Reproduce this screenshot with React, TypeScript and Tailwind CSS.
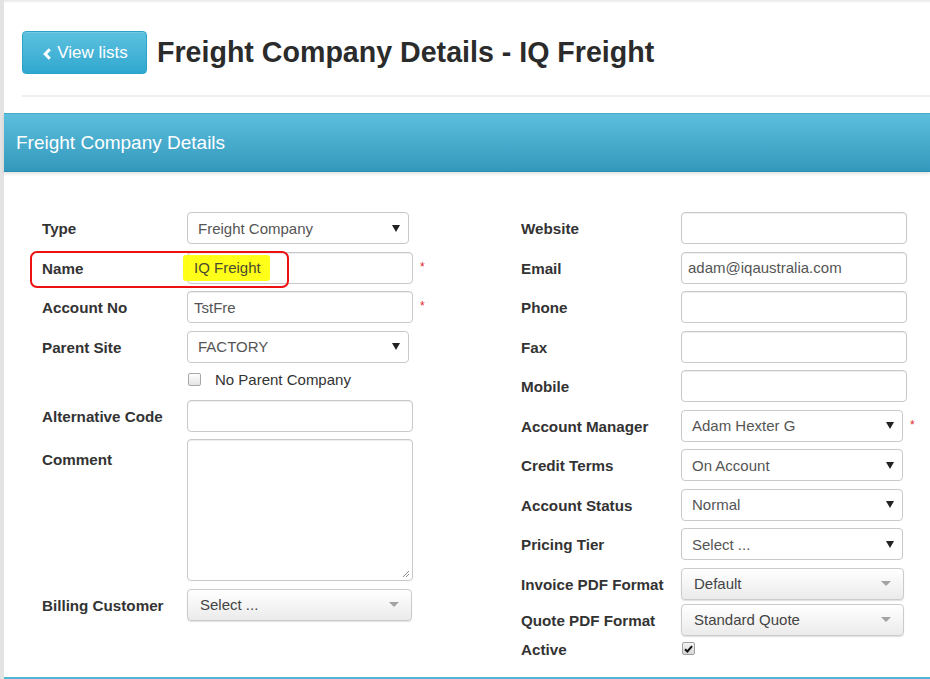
import type { ReactNode } from "react";

function Label({ children, w }: { children: ReactNode; w: string }) {
  return (
    <div className={`${w} shrink-0 pt-[2px] text-[15.2px] font-bold leading-[18px] text-[#333]`}>
      {children}
    </div>
  );
}

function Req() {
  return (
    <span className="ml-[7px] self-start pt-[9px] text-[12px] leading-none text-[#e4262c]">
      *
    </span>
  );
}

function TextInput({ value, className = "w-[226px]" }: { value?: string; className?: string }) {
  return (
    <div
      className={`flex h-8 items-center rounded-[4px] border border-[#c9c9c9] bg-white px-[6px] pt-[2px] text-[15px] text-[#555] shadow-[inset_0_1px_1px_rgba(0,0,0,0.075)] ${className}`}
    >
      {value}
    </div>
  );
}

function NativeSelect({ value, className = "w-[222px]" }: { value: string; className?: string }) {
  return (
    <div
      className={`flex h-8 items-center justify-between rounded-[4px] border border-[#c9c9c9] bg-white pl-[10px] pr-[8px] text-[15px] text-[#555] ${className}`}
    >
      <span className="pt-[2px]">{value}</span>
      <svg width="8" height="7" viewBox="0 0 8 7" aria-hidden>
        <path d="M0 0h8L4 7z" fill="#222" />
      </svg>
    </div>
  );
}

function Select2({ value, className = "w-[223px]" }: { value: string; className?: string }) {
  return (
    <div
      className={`flex h-8 items-center justify-between rounded-[4px] border border-[#cbcbcb] bg-gradient-to-b from-white to-[#ebebeb] pl-[12px] pr-[12px] text-[15px] text-[#444] shadow-[0_1px_1px_rgba(0,0,0,0.12)] ${className}`}
    >
      <span className="pt-px">{value}</span>
      <svg width="10" height="5" viewBox="0 0 10 5" aria-hidden>
        <path d="M0 0h10L5 5z" fill="#a3a3a3" />
      </svg>
    </div>
  );
}

function Row({ label, w, children }: { label: string; w: string; children: ReactNode }) {
  return (
    <div className="flex h-8 items-center">
      <Label w={w}>{label}</Label>
      {children}
    </div>
  );
}

export default function App() {
  const lw = "w-[145px]";
  const rw = "w-[160px]";

  return (
    <div className="flex min-h-[679px] w-[930px] overflow-hidden bg-white font-['Liberation_Sans',Arial,sans-serif] text-[#333]">
      <div className="w-[4px] shrink-0 bg-[#e3e3e3]" />

      <div className="flex min-w-0 flex-1 flex-col">
        <div className="h-[3px] bg-gradient-to-b from-[#e6e6e6] to-white" />

        {/* page heading */}
        <div className="flex items-center gap-[10px] pl-[18px] pt-[28px]">
          <button className="flex h-[43px] w-[125px] items-center justify-center gap-[6px] rounded-[4px] border border-[#2aa3c7] bg-gradient-to-b from-[#5cc1df] to-[#2ea8cf] pl-[2px] text-[17px] text-white shadow-[inset_0_1px_0_rgba(255,255,255,0.15)]">
            <svg width="8" height="12" viewBox="0 0 8 12" className="mt-[2px]" aria-hidden>
              <path d="M6.8 1.3L2.2 6l4.6 4.7" fill="none" stroke="white" strokeWidth="3" />
            </svg>
            <span>View lists</span>
          </button>
          <h1 className="text-[28.6px] font-bold leading-none text-[#2b2b2b]">
            Freight Company Details - IQ Freight
          </h1>
        </div>

        <div className="ml-[18px] mt-[21px] h-[2px] bg-[#efefef]" />

        {/* panel */}
        <div className="mt-[16px] flex flex-1 flex-col border-b-2 border-[#4fb6d7]">
          <div className="flex h-[59px] items-center border-y border-t-[#49aacb] border-b-[#2b8fb1] bg-gradient-to-b from-[#5bbedd] to-[#3399bc] pl-[12px] pt-[2px] text-[19px] text-white shadow-[0_2px_3px_rgba(0,0,0,0.12)]">
            Freight Company Details
          </div>

          <div className="flex flex-1 pt-[40px]">
            {/* left column */}
            <div className="flex w-[517px] shrink-0 flex-col gap-[7.5px] pl-[38px]">
              <Row label="Type" w={lw}>
                <NativeSelect value="Freight Company" />
              </Row>

              <div className="relative flex h-8 items-center">
                <Label w={lw}>Name</Label>
                <div className="relative flex h-8 w-[226px] items-center rounded-[4px] border border-[#c9c9c9] bg-white px-[6px] pt-[2px] text-[15px] text-[#4a4a30] shadow-[inset_0_1px_1px_rgba(0,0,0,0.075)]">
                  <span className="absolute left-[-5px] top-[2px] h-[26px] w-[87px] rounded-[3px] bg-[#ffff00]/90" />
                  <span className="relative">IQ Freight</span>
                </div>
                <Req />
                <div className="pointer-events-none absolute left-[-12px] top-[-1px] h-[37px] w-[259px] rounded-[7px] border-2 border-[#ee1111]" />
              </div>

              <Row label="Account No" w={lw}>
                <TextInput value="TstFre" />
                <Req />
              </Row>

              <Row label="Parent Site" w={lw}>
                <NativeSelect value="FACTORY" />
              </Row>

              <div className="flex h-[22px] items-start pl-[146px] pt-[3px]">
                <div className="h-[13px] w-[13px] rounded-[2px] border border-[#a8a8a8] bg-gradient-to-b from-white to-[#e4e4e4]" />
                <span className="-mt-[2px] ml-[14px] text-[15px] leading-[18px] text-[#333]">
                  No Parent Company
                </span>
              </div>

              <Row label="Alternative Code" w={lw}>
                <TextInput />
              </Row>

              <div className="flex items-start">
                <div className="pt-[10px]">
                  <Label w={lw}>Comment</Label>
                </div>
                <div className="relative h-[142px] w-[226px] rounded-[4px] border border-[#c9c9c9] bg-white shadow-[inset_0_1px_1px_rgba(0,0,0,0.075)]">
                  <svg className="absolute bottom-[2px] right-[2px]" width="8" height="8" viewBox="0 0 8 8" aria-hidden>
                    <path d="M7 1L1 7M7 4L4 7" stroke="#888" strokeWidth="1" />
                  </svg>
                </div>
              </div>

              <Row label="Billing Customer" w={lw}>
                <Select2 value="Select ..." className="w-[225px]" />
              </Row>
            </div>

            {/* right column */}
            <div className="flex flex-1 flex-col gap-[7.5px]">
              <Row label="Website" w={rw}>
                <TextInput />
              </Row>
              <Row label="Email" w={rw}>
                <TextInput value="adam@iqaustralia.com" />
              </Row>
              <Row label="Phone" w={rw}>
                <TextInput />
              </Row>
              <Row label="Fax" w={rw}>
                <TextInput />
              </Row>
              <Row label="Mobile" w={rw}>
                <TextInput />
              </Row>
              <Row label="Account Manager" w={rw}>
                <NativeSelect value="Adam Hexter G" />
                <Req />
              </Row>
              <Row label="Credit Terms" w={rw}>
                <NativeSelect value="On Account" />
              </Row>
              <Row label="Account Status" w={rw}>
                <NativeSelect value="Normal" />
              </Row>
              <Row label="Pricing Tier" w={rw}>
                <NativeSelect value="Select ..." />
              </Row>

              <div className="flex flex-col gap-[4px]">
                <Row label="Invoice PDF Format" w={rw}>
                  <Select2 value="Default" />
                </Row>
                <Row label="Quote PDF Format" w={rw}>
                  <Select2 value="Standard Quote" />
                </Row>
                <div className="flex h-[18px] items-center">
                  <Label w={rw}>Active</Label>
                  <div className="ml-px flex h-[13px] w-[13px] items-center justify-center rounded-[2px] border border-[#a0a0a0] bg-gradient-to-b from-[#f4f4f4] to-[#d6d6d6]">
                    <svg width="9" height="8" viewBox="0 0 9 8" aria-hidden>
                      <path d="M1 4.2L3.4 6.5L8 1.2" fill="none" stroke="#111" strokeWidth="2" />
                    </svg>
                  </div>
                </div>
              </div>
            </div>
          </div>
        </div>
      </div>
    </div>
  );
}
